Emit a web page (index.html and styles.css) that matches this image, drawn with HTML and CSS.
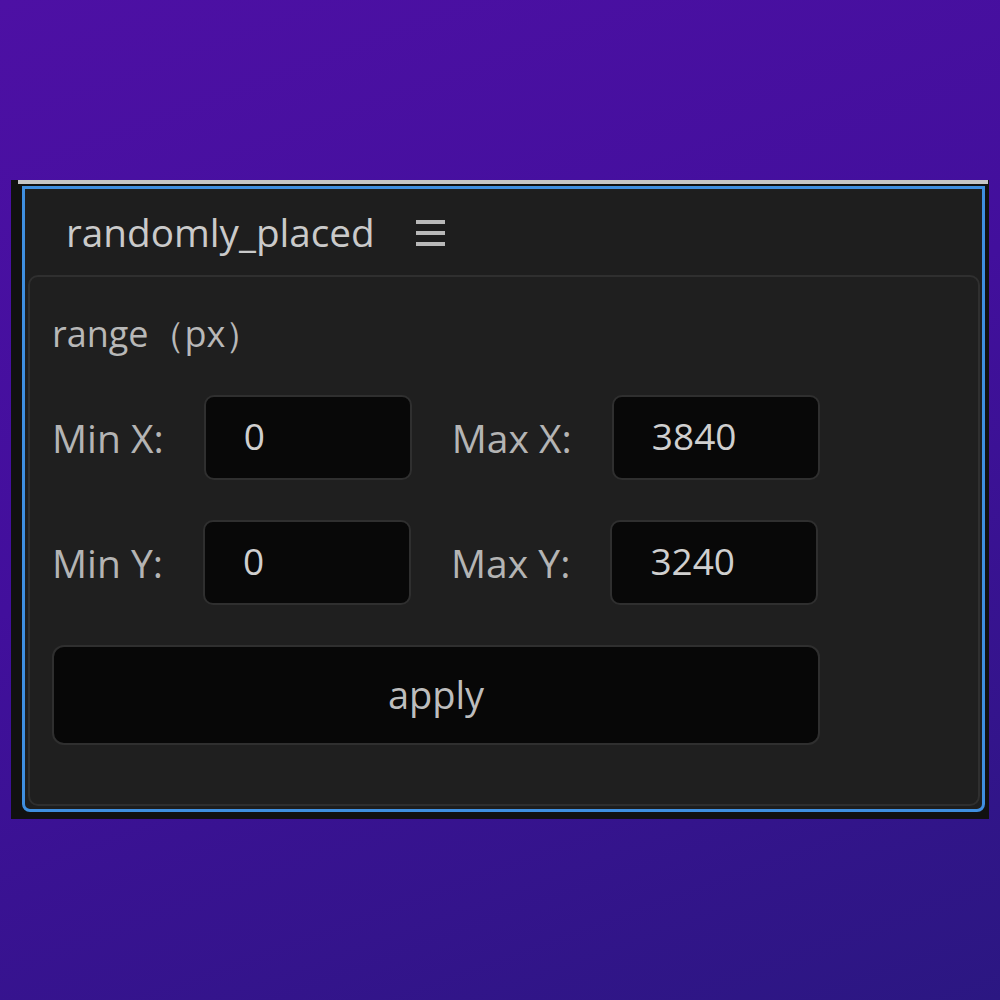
FILE: index.html
```html
<!DOCTYPE html>
<html lang="en">
<head>
    <meta charset="UTF-8">
    <meta name="viewport" content="width=device-width, initial-scale=1.0">
    <title>randomly_placed</title>
    <link rel="stylesheet" href="styles.css">
</head>
<body>
    <div class="window">
        <div class="title-line"></div>
        <div class="panel">
            <div class="panel-header">
                <span class="panel-title">randomly_placed</span>
                <!-- flyout menu -->
                <svg class="menu-icon" width="29" height="26" viewBox="0 0 29 26">
                    <rect x="0" y="0" width="29" height="4" fill="#b9b9b9"/>
                    <rect x="0" y="11" width="29" height="4" fill="#b9b9b9"/>
                    <rect x="0" y="22" width="29" height="4" fill="#b9b9b9"/>
                </svg>
            </div>
            <div class="panel-body">
                <p class="section-title">range（px）</p>
                <div class="field-row">
                    <label class="field-label" for="minX">Min X:</label>
                    <input class="field-input" id="minX" type="text" value="0">
                    <label class="field-label" for="maxX">Max X:</label>
                    <input class="field-input" id="maxX" type="text" value="3840">
                </div>
                <div class="field-row">
                    <label class="field-label" for="minY">Min Y:</label>
                    <input class="field-input" id="minY" type="text" value="0">
                    <label class="field-label" for="maxY">Max Y:</label>
                    <input class="field-input" id="maxY" type="text" value="3240">
                </div>
                <button class="apply-btn">apply</button>
            </div>
        </div>
    </div>
</body>
</html>
```

FILE: styles.css
```css
body {
    margin: 0;
    padding: 0;
    height: 1000px;
    overflow: hidden;
    font-family: "Open Sans", "Noto Sans", sans-serif;
    background: linear-gradient(160deg, #4d10a4 0%, #420f9c 45%, #2b1782 100%);
}

/* outer window frame */
.window {
    margin: 180px 11px 0 11px;
    width: 978px;
    height: 639px;
    background-color: #111111;
    display: flex;
    flex-direction: column;
}
.title-line {
    height: 4px;
    margin: 0 1px 0 7px;
    background-color: #c6c6c6;
}

/* the focused panel, blue outline */
.panel {
    flex: 1;
    margin: 2px 4px 7px 11px;
    border: 3px solid #3f8fe0;
    border-radius: 0 0 8px 8px;
    background-color: #1e1e1e;
    display: flex;
    flex-direction: column;
}
.panel-header {
    height: 86px;
    display: flex;
    align-items: center;
    gap: 41px;
    padding-left: 41px;
}
.panel-title {
    font-size: 38.7px;
    color: #cacaca;
}
.menu-icon {
    display: block;
    margin-top: 2px;
}

.panel-body {
    flex: 1;
    margin: 0 2px 3px 3px;
    border: 2px solid #2f2f2f;
    border-radius: 10px;
    background-color: #1f1f1f;
    padding: 27px 0 0 22px;
}
.section-title {
    margin: 0 0 31px 0;
    font-size: 36px;
    line-height: 60px;
    color: #b8b8b8;
}

.field-row {
    display: flex;
    align-items: center;
    gap: 40px;
    margin-bottom: 40px;
}
.field-label {
    font-size: 39px;
    color: #b4b4b4;
}
.field-input {
    box-sizing: border-box;
    width: 208px;
    height: 85px;
    padding: 0 0 4px 38px;
    border: 2px solid #2f2f2f;
    border-radius: 10px;
    background-color: #080808;
    color: #cfcfcf;
    font-family: "Open Sans", "Noto Sans", sans-serif;
    font-size: 37px;
    outline: none;
}

.apply-btn {
    display: block;
    box-sizing: border-box;
    width: 768px;
    height: 100px;
    padding-bottom: 4px;
    border: 2px solid #2f2f2f;
    border-radius: 12px;
    background-color: #070707;
    color: #bdbdbd;
    font-family: "Open Sans", "Noto Sans", sans-serif;
    font-size: 38px;
    cursor: pointer;
}
```
